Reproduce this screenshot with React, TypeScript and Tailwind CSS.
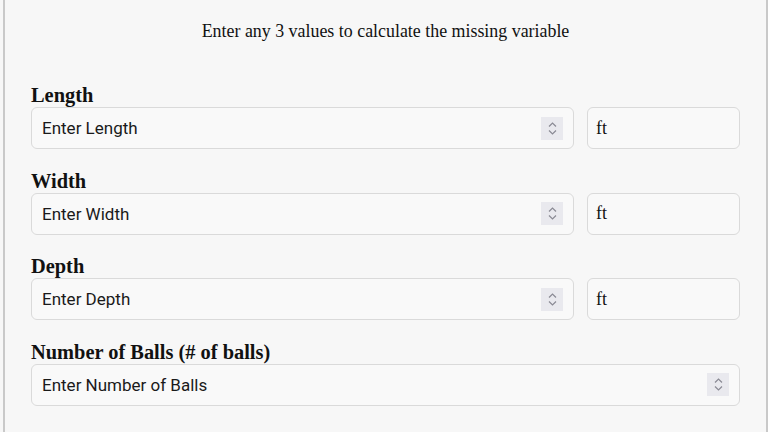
import React from "react";

const fields = [
  { label: "Length", placeholder: "Enter Length", unit: "ft" },
  { label: "Width", placeholder: "Enter Width", unit: "ft" },
  { label: "Depth", placeholder: "Enter Depth", unit: "ft" },
  { label: "Number of Balls (# of balls)", placeholder: "Enter Number of Balls" },
];

function Spinner() {
  return (
    <div className="flex h-[23px] w-[22px] shrink-0 flex-col items-center justify-center gap-[3px] bg-[#e9e9ee]">
      <svg width="9" height="5" viewBox="0 0 9 5" fill="none">
        <path d="M1 4.5L4.5 1L8 4.5" stroke="#8a8a94" strokeWidth="1.2" />
      </svg>
      <svg width="9" height="5" viewBox="0 0 9 5" fill="none">
        <path d="M1 0.5L4.5 4L8 0.5" stroke="#8a8a94" strokeWidth="1.2" />
      </svg>
    </div>
  );
}

export default function App() {
  return (
    <div className="h-[432px] w-[768px] overflow-hidden bg-[#f7f7f7]">
      <div className="ml-[3px] h-full border-x-2 border-[#c9c9c9] px-[26px] text-[#111]">
        <p className="pt-[19px] text-center font-['Liberation_Serif',serif] text-[17.9px] leading-[24px]">
          Enter any 3 values to calculate the missing variable
        </p>
        <div className="mt-[41px] flex flex-col">
          {fields.map((f) => (
            <div key={f.label} className="mb-[20.5px] flex flex-col">
              <label className="h-[22px] font-['Liberation_Serif',serif] text-[20.4px] font-bold leading-[22px]">
                {f.label}
              </label>
              <div className="mt-px flex gap-[13px]">
                <div className="flex h-[42px] flex-1 items-center rounded-[6px] border border-[#dadada] bg-[#f9f9f9] pl-[10px] pr-[10px]">
                  <input
                    type="text"
                    placeholder={f.placeholder}
                    className="min-w-0 flex-1 bg-transparent pt-[2px] font-['Roboto',sans-serif] text-[17px] text-[#1a1a1a] outline-none placeholder:text-[#1a1a1a]"
                  />
                  <Spinner />
                </div>
                {f.unit && (
                  <div className="flex h-[42px] w-[153px] items-center rounded-[6px] border border-[#dadada] bg-[#f9f9f9] pl-[8px] font-['Liberation_Serif',serif] text-[18px]">
                    {f.unit}
                  </div>
                )}
              </div>
            </div>
          ))}
        </div>
      </div>
    </div>
  );
}
